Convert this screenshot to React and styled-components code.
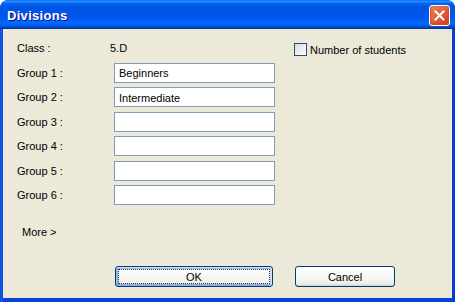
import React from 'react';
import styled, { createGlobalStyle } from 'styled-components';

const GlobalStyle = createGlobalStyle`
  html, body {
    margin: 0;
    padding: 0;
    background: #ffffff;
  }
  body {
    font-family: "Liberation Sans", Arial, sans-serif;
    font-size: 11px;
    color: #000;
  }
`;

const Window = styled.div`
  width: 455px;
  height: 302px;
  display: flex;
  flex-direction: column;
  background: linear-gradient(to right, #0a3fd8 0, #1a5ef0 1px, #0846d8 3px, #0846d8 452px, #0831d9 455px);
  border-radius: 8px 8px 0 0;
  overflow: hidden;
  box-sizing: border-box;
`;

const TitleBar = styled.div`
  height: 29px;
  flex: none;
  display: flex;
  align-items: center;
  justify-content: space-between;
  padding: 0 5px 0 7px;
  background: linear-gradient(
    to bottom,
    #0058ee 0%, #3593ff 4%, #288eff 6%, #127dff 8%, #036ffc 10%,
    #0262ee 14%, #0057e5 20%, #0054e3 24%, #0055eb 56%, #005bf5 66%,
    #026afe 76%, #0062ef 86%, #0052d6 92%, #0040ab 96%, #003092 100%
  );
  border-radius: 8px 8px 0 0;
`;

const Title = styled.span`
  font-family: "Liberation Sans", Arial, sans-serif;
  font-weight: bold;
  font-size: 13px;
  color: #fff;
  letter-spacing: 0.3px;
  text-shadow: 1px 1px #0f1089;
  margin-top: 1px;
`;

const CloseButton = styled.button`
  width: 21px;
  height: 21px;
  padding: 0;
  border: 1px solid #fff;
  border-radius: 3px;
  background: radial-gradient(circle at 85% 85%, #cc4625 0%, #db5b34 45%, #e98f6f 100%);
  box-shadow: inset 0 -1px 2px 1px #da4620;
  display: flex;
  align-items: center;
  justify-content: center;
  margin-top: 1px;
`;

const Client = styled.div`
  flex: 1;
  margin: 0 3px 4px 3px;
  background: #ece9d8;
  display: flex;
  flex-direction: column;
  padding: 8px 0 11px 14px;
`;

const FormGrid = styled.div`
  display: grid;
  grid-template-columns: 97px 161px 19px auto;
  grid-template-rows: 21.6px repeat(6, 20px);
  row-gap: 4.4px;
`;

const Label = styled.div`
  grid-column: 1;
  display: flex;
  align-items: center;
  white-space: nowrap;
`;

const Value = styled.div`
  grid-column: 2;
  display: flex;
  align-items: center;
  margin-left: ${p => p.shift || 0}px;
`;

const TextBox = styled.input`
  grid-column: 2;
  box-sizing: border-box;
  width: 161px;
  height: 20px;
  margin: 0;
  border: 1px solid #7f9db9;
  background: #fff;
  padding: 1px 4px 0;
  font-family: "Liberation Sans", Arial, sans-serif;
  font-size: 11px;
  color: #000;
  outline: none;
`;

const CheckLabel = styled.label`
  grid-column: 4;
  grid-row: 1;
  display: flex;
  align-items: center;
  gap: 3px;
  align-self: start;
  margin-top: 6px;
  white-space: nowrap;
`;

const CheckBox = styled.span`
  width: 13px;
  height: 13px;
  box-sizing: border-box;
  border: 1px solid #1c5180;
  background: linear-gradient(135deg, #dcdcd7 0%, #fff 100%);
  flex: none;
`;

const MoreLink = styled.div`
  margin: 21px 0 0 5px;
  line-height: 13px;
`;

const ButtonRow = styled.div`
  margin-top: auto;
  display: flex;
  gap: 22px;
  padding-left: 98px;
`;

const Button = styled.button`
  box-sizing: border-box;
  width: ${p => p.w}px;
  height: 21px;
  margin: 0;
  padding: 0;
  border: 1px solid #003c74;
  border-radius: 3px;
  font-family: "Liberation Sans", Arial, sans-serif;
  font-size: 11px;
  color: #000;
  background: linear-gradient(to bottom, #ffffff 0%, #f0f0ea 86%, #d6d0c5 100%);
  box-shadow: ${p => p.primary
    ? 'inset -1px 1px #cee7ff, inset 1px 2px #98b8ea, inset -2px 2px #bcd4f6, inset 1px -1px #89ade4, inset 2px -2px #89ade4'
    : 'none'};
  position: relative;
  &::after {
    content: '';
    display: ${p => p.primary ? 'block' : 'none'};
    position: absolute;
    inset: 2px;
    border: 1px dotted #333;
  }
`;

const groups = ['Beginners', 'Intermediate', '', '', '', ''];

export default function App() {
  return (
    <>
      <GlobalStyle />
      <Window>
        <TitleBar>
          <Title>Divisions</Title>
          <CloseButton aria-label="Close">
            <svg width="11" height="11" viewBox="0 0 11 11">
              <path d="M1.5 1.5 L9.5 9.5 M9.5 1.5 L1.5 9.5" stroke="#fff" strokeWidth="2" strokeLinecap="square" />
            </svg>
          </CloseButton>
        </TitleBar>
        <Client>
          <FormGrid>
            <Label>Class :</Label>
            <Value shift={-4}>5.D</Value>
            <CheckLabel>
              <CheckBox />
              Number of students
            </CheckLabel>
            {groups.map((g, i) => (
              <React.Fragment key={i}>
                <Label>{`Group ${i + 1} :`}</Label>
                <TextBox defaultValue={g} />
              </React.Fragment>
            ))}
          </FormGrid>
          <MoreLink>More &gt;</MoreLink>
          <ButtonRow>
            <Button primary w={158}>OK</Button>
            <Button w={100}>Cancel</Button>
          </ButtonRow>
        </Client>
      </Window>
    </>
  );
}
